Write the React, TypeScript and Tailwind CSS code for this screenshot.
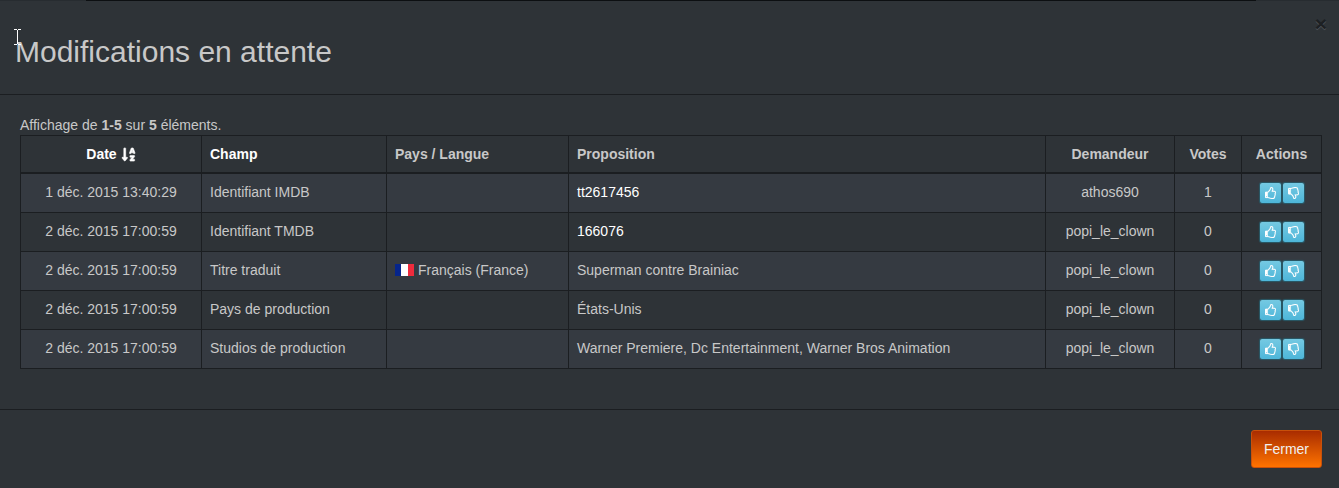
import type { ReactNode } from 'react';
import { FaSortAlphaDown } from 'react-icons/fa';

type Change = {
  date: string;
  field: string;
  country?: string;
  proposal: string;
  linked?: boolean;
  user: string;
  votes: number;
};

const changes: Change[] = [
  { date: '1 déc. 2015 13:40:29', field: 'Identifiant IMDB', proposal: 'tt2617456', linked: true, user: 'athos690', votes: 1 },
  { date: '2 déc. 2015 17:00:59', field: 'Identifiant TMDB', proposal: '166076', linked: true, user: 'popi_le_clown', votes: 0 },
  { date: '2 déc. 2015 17:00:59', field: 'Titre traduit', country: 'Français (France)', proposal: 'Superman contre Brainiac', user: 'popi_le_clown', votes: 0 },
  { date: '2 déc. 2015 17:00:59', field: 'Pays de production', proposal: 'États-Unis', user: 'popi_le_clown', votes: 0 },
  { date: '2 déc. 2015 17:00:59', field: 'Studios de production', proposal: 'Warner Premiere, Dc Entertainment, Warner Bros Animation', user: 'popi_le_clown', votes: 0 },
];

function FrenchFlag() {
  return (
    <svg className="h-3 w-[19px] shrink-0" viewBox="0 0 19 12" aria-hidden="true">
      <path fill="#06258c" d="M0 0h6v12H0z" />
      <path fill="#ffffff" d="M6 0h7v12H6z" />
      <path fill="#ee2b3d" d="M13 0h6v12h-6z" />
    </svg>
  );
}

function TextCursor() {
  return (
    <svg className="absolute top-7 left-[13px] h-[17px] w-[9px]" viewBox="0 0 9 17" fill="none" stroke="#ffffff" aria-hidden="true">
      <path d="M1 .5h3M5 .5h3M4.500 1v14M1 15.500h3M5 15.500h3" />
    </svg>
  );
}

function Thumb({ down = false }: { down?: boolean }) {
  return (
    <svg
      className={down ? 'h-3 w-[11px] -scale-y-100' : 'h-3 w-[11px]'}
      viewBox="0 0 1536 1664"
      fill="currentColor"
      fillRule="evenodd"
      stroke="currentColor"
      strokeWidth="24"
      aria-hidden="true"
    >
      <path d="M256 1344q0-26-19-45t-45-19-45 19-19 45 19 45 45 19 45-19 19-45zM1408 768q0-51-39-89.500t-89-38.500h-352q0-58 48-159.500t48-160.500q0-98-32-145t-128-47q-26 26-38 85t-30.500 125.500-59.500 109.500q-22 23-77 91-4 5-23 30t-31.500 41-34.500 42.500-40 44-38.500 35.500-40 27-35.500 9h-32v640h32q13 0 31.500 3t33 6.500 38 11 35 11.500 35.500 12.500 29 10.500q211 73 342 73h121q192 0 192-167 0-26-5-56 30-16 47.500-52.500t17.500-73.500-18-69q53-50 53-119 0-25-10-55.500t-25-47.500q32-1 53.500-47t21.500-81zM1536 767q0 89-49 163 9 33 9 69 0 77-38 144 3 21 3 43 0 101-60 178 1 139-85 219.500t-227 80.500h-129q-96 0-189.500-22.500t-216.500-65.500q-116-40-138-40h-288q-53 0-90.500-37.500t-37.500-90.500v-640q0-53 37.500-90.500t90.500-37.500h274q36-24 137-155 58-75 107-128 24-25 35.500-85.500t30.500-126.500 62-108q39-37 90-37 84 0 151 32.500t102 101.500 35 186q0 93-48 192h176q104 0 180 76t76 179z" />
    </svg>
  );
}

function VoteButton({ label, children }: { label: string; children: ReactNode }) {
  return (
    <button
      type="button"
      aria-label={label}
      className="flex h-5 w-[21px] items-center justify-center rounded-xs bg-linear-to-b from-[#74c9e2] to-[#4db6d9] text-white shadow-[0_0_1px_1px_#285a69]"
    >
      {children}
    </button>
  );
}

function Th({ children, className = '' }: { children: ReactNode; className?: string }) {
  return (
    <th scope="col" className={`border border-b-2 border-[#1b1e21] px-2 py-2 leading-5 font-bold ${className}`}>
      {children}
    </th>
  );
}

function Td({ children, className = '' }: { children?: ReactNode; className?: string }) {
  return <td className={`border border-[#1b1e21] px-2 pt-2 pb-[10px] align-top leading-5 ${className}`}>{children}</td>;
}

export default function App() {
  return (
    <main className="relative min-h-screen border-t border-[#0c0f11] bg-[#2e3337] font-['Liberation_Sans',Arial,sans-serif] text-sm text-[#c8c8c8]">
      <div className="absolute -top-px left-0 h-px w-[86px] bg-[#272c30]" />
      <div className="absolute -top-px right-0 h-px w-[83px] bg-[#272c30]" />
      <header className="relative flex items-start justify-between border-b border-[#1b1e21] pr-3 pl-[15px]">
        <h1 className="pt-[34px] pb-[26px] text-[30px] leading-[33px]">Modifications en attente</h1>
        <TextCursor />
        <button type="button" aria-label="Fermer la fenêtre" className="mt-3 text-[21px] leading-[21px] font-bold text-[#1d2023] [text-shadow:0_1px_0_#50555a]">
          ×
        </button>
      </header>

      <section className="pt-5 pr-[17px] pb-10 pl-5">
        <p className="leading-5">
          Affichage de <b>1-5</b> sur <b>5</b> éléments.
        </p>
        <table className="w-full table-fixed border-collapse">
          <colgroup>
            <col className="w-[181px]" />
            <col className="w-[185px]" />
            <col className="w-[182px]" />
            <col />
            <col className="w-[129px]" />
            <col className="w-[67px]" />
            <col className="w-[80px]" />
          </colgroup>
          <thead>
            <tr>
              <Th className="text-center text-white">
                <a href="#date" className="inline-flex items-center gap-1">
                  Date
                  <FaSortAlphaDown className="size-[15px] stroke-white stroke-[20px]" aria-hidden="true" />
                </a>
              </Th>
              <Th className="text-left text-white">
                <a href="#champ">Champ</a>
              </Th>
              <Th className="text-left">Pays / Langue</Th>
              <Th className="text-left">Proposition</Th>
              <Th className="text-center">Demandeur</Th>
              <Th className="text-center">Votes</Th>
              <Th className="text-center">Actions</Th>
            </tr>
          </thead>
          <tbody>
            {changes.map((change) => (
              <tr key={change.field} className="odd:bg-[#353a41]">
                <Td className="text-center">{change.date}</Td>
                <Td>{change.field}</Td>
                <Td>
                  {change.country && (
                    <span className="flex items-center gap-1">
                      <FrenchFlag />
                      {change.country}
                    </span>
                  )}
                </Td>
                <Td>
                  {change.linked ? (
                    <a href={`#${change.proposal}`} className="text-white">
                      {change.proposal}
                    </a>
                  ) : (
                    change.proposal
                  )}
                </Td>
                <Td className="text-center">{change.user}</Td>
                <Td className="text-center">{change.votes}</Td>
                <td className="border border-[#1b1e21] px-2 py-[9px]">
                  <div className="flex justify-center gap-[2px]">
                    <VoteButton label="Voter pour">
                      <Thumb />
                    </VoteButton>
                    <VoteButton label="Voter contre">
                      <Thumb down />
                    </VoteButton>
                  </div>
                </td>
              </tr>
            ))}
          </tbody>
        </table>
      </section>

      <footer className="flex justify-end border-t border-[#1b1e21] py-5 pr-[17px]">
        <button
          type="button"
          className="h-[38px] rounded-[3px] border border-[#c8500a] bg-linear-to-b from-[#a92c00] to-[#ff7300] px-3 leading-5 text-[#f0f0f0]"
        >
          Fermer
        </button>
      </footer>
    </main>
  );
}
